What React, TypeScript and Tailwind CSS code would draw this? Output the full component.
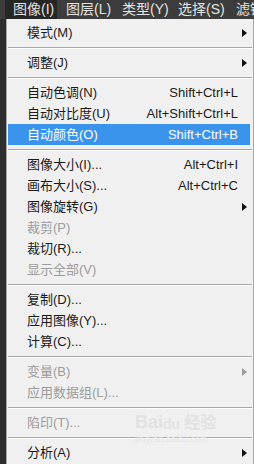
import React from 'react';

type Item =
  | { sep: true }
  | { label: string; shortcut?: string; sub?: boolean; disabled?: boolean; active?: boolean; sep?: false };

const items: Item[] = [
  { label: '模式(M)', sub: true },
  { sep: true },
  { label: '调整(J)', sub: true },
  { sep: true },
  { label: '自动色调(N)', shortcut: 'Shift+Ctrl+L' },
  { label: '自动对比度(U)', shortcut: 'Alt+Shift+Ctrl+L' },
  { label: '自动颜色(O)', shortcut: 'Shift+Ctrl+B', active: true },
  { sep: true },
  { label: '图像大小(I)...', shortcut: 'Alt+Ctrl+I' },
  { label: '画布大小(S)...', shortcut: 'Alt+Ctrl+C' },
  { label: '图像旋转(G)', sub: true },
  { label: '裁剪(P)', disabled: true },
  { label: '裁切(R)...' },
  { label: '显示全部(V)', disabled: true },
  { sep: true },
  { label: '复制(D)...' },
  { label: '应用图像(Y)...' },
  { label: '计算(C)...' },
  { sep: true },
  { label: '变量(B)', sub: true, disabled: true },
  { label: '应用数据组(L)...', disabled: true },
  { sep: true },
  { label: '陷印(T)...', disabled: true },
  { sep: true },
  { label: '分析(A)', sub: true },
];

const Arrow = ({ color }: { color: string }) => (
  <svg width="5" height="8" viewBox="0 0 5 8" className="shrink-0">
    <path d="M0 0 L5 4 L0 8 Z" fill={color} />
  </svg>
);

export default function App() {
  return (
    <div
      className="w-[254px] h-[464px] overflow-hidden bg-[#323232] flex flex-col"
      style={{ fontFamily: '"Liberation Sans", "Noto Sans CJK SC", sans-serif' }}
    >
      {/* Top menu bar */}
      <div className="h-[19px] bg-[#3c3c3c] flex items-center text-[14px] text-[#e4e4e4] whitespace-nowrap overflow-hidden">
        <div className="ml-[5px] h-full w-[52px] shrink-0 flex items-center bg-[#262626] pl-[8px]">图像(I)</div>
        <div className="ml-[9px] w-[56px] shrink-0">图层(L)</div>
        <div className="w-[56px] shrink-0">类型(Y)</div>
        <div className="w-[56px] shrink-0">选择(S)</div>
        <div className="shrink-0 ml-[2px]">滤镜</div>
      </div>

      <div className="flex flex-1 min-h-0">
        {/* dark strip to the left of the dropdown */}
        <div className="w-[6px] bg-[#2e2e2e]" />

        {/* Dropdown */}
        <div className="relative flex-1 bg-[#f0f0f0] border-l border-r border-[#a8a8a8] pt-[3px] pl-[1px] pr-[3px] text-[13px] text-[#1b1b1b]">
          {items.map((it, i) =>
            it.sep ? (
              <div key={i} className="h-[9px] flex flex-col justify-center">
                <div className="h-px bg-[#a7a7a7] mr-[-2px]" />
                <div className="h-px bg-white mr-[-2px]" />
              </div>
            ) : (
              <div
                key={i}
                className={
                  'h-[21px] flex items-center pl-[19px] pr-[4px] whitespace-nowrap ' +
                  (it.active ? 'bg-[#3a94ec] text-white' : it.disabled ? 'text-[#9c9c9c]' : '')
                }
              >
                <span className="flex-1">{it.label}</span>
                {it.shortcut && <span className="mr-[8px]">{it.shortcut}</span>}
                {it.sub && (
                  <span className="mr-[-1px]">
                    <Arrow color={it.disabled ? '#9c9c9c' : '#111111'} />
                  </span>
                )}
              </div>
            )
          )}

          {/* watermark */}
          <div className="absolute left-[128px] top-[394px] flex flex-col items-start pointer-events-none select-none">
            <div className="flex items-end text-[18px] font-bold text-[#e2e2e2] leading-none">
              <span>Bai</span>
              <span className="text-[14px]">du</span>
              <span className="ml-[4px] text-[16px]">经验</span>
            </div>
            <div className="text-[9px] text-[#e4e4e4] mt-[2px]">jingyan.baidu.com</div>
          </div>
        </div>
      </div>
    </div>
  );
}
